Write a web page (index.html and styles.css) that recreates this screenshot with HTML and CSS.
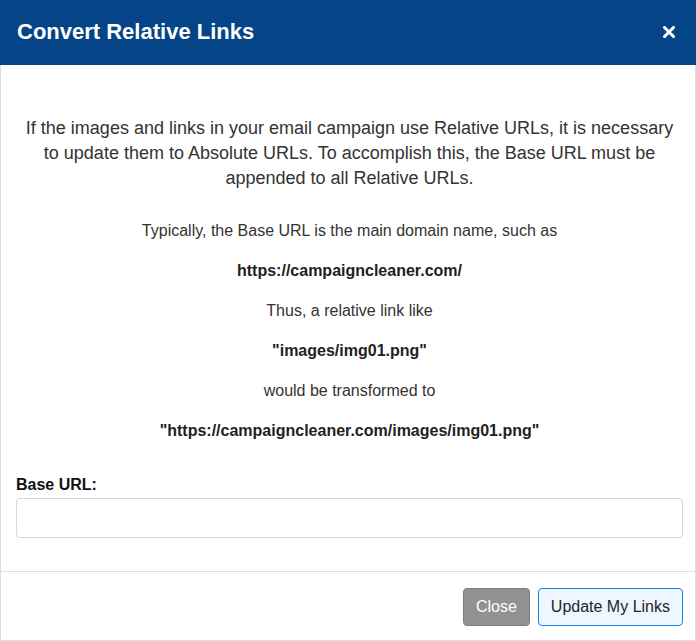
FILE: index.html
```html
<!DOCTYPE html>
<html lang="en">
<head>
<meta charset="utf-8">
<title>Convert Relative Links</title>
<link rel="stylesheet" href="styles.css">
</head>
<body>
<div class="modal">
  <div class="modal-header">
    <h5 class="modal-title">Convert Relative Links</h5>
    <button class="btn-x" type="button" aria-label="Close">
      <svg width="12" height="12" viewBox="0 0 12 12"><path d="M1.5 1.5 L10.5 10.5 M10.5 1.5 L1.5 10.5" stroke="#fff" stroke-width="3" stroke-linecap="square"/></svg>
    </button>
  </div>
  <div class="modal-body">
    <p class="lead">If the images and links in your email campaign use Relative URLs, it is necessary to update them to Absolute URLs. To accomplish this, the Base URL must be appended to all Relative URLs.</p>
    <p class="info">Typically, the Base URL is the main domain name, such as</p>
    <p class="info strong">https://campaigncleaner.com/</p>
    <p class="info">Thus, a relative link like</p>
    <p class="info strong">"images/img01.png"</p>
    <p class="info">would be transformed to</p>
    <p class="info strong">"https://campaigncleaner.com/images/img01.png"</p>
    <label class="field-label" for="baseurl">Base URL:</label>
    <input class="field-input" id="baseurl" type="text">
  </div>
  <div class="modal-footer">
    <button class="btn btn-close" type="button">Close</button>
    <button class="btn btn-update" type="button">Update My Links</button>
  </div>
</div>
</body>
</html>
```
FILE: styles.css
```css
* { box-sizing: border-box; }
html, body { margin: 0; padding: 0; background: #fff; }
body { font-family: "Liberation Sans", Arial, sans-serif; color: #333; }

.modal {
  width: 696px;
  height: 641px;
  border: 1px solid #dcdcdc;
  border-top: 0;
  display: flex;
  flex-direction: column;
  background: #fff;
}

.modal-header {
  height: 67px;
  margin: 0 -1px;
  background: #054487;
  display: flex;
  align-items: center;
  justify-content: space-between;
  padding: 0 21px 2px 17px;
}
.modal-title {
  margin: 0;
  font-size: 22px;
  font-weight: bold;
  color: #fff;
  line-height: 26px;
}
.btn-x {
  border: 0;
  background: transparent;
  padding: 0;
  width: 12px;
  height: 12px;
  display: flex;
}

.modal-body {
  flex: 1;
  padding: 51px 12px 33px 15px;
  text-align: center;
}
.lead {
  margin: 0 0 28px;
  font-size: 18px;
  line-height: 25px;
  padding: 0 6px;
}
.info {
  margin: 0 0 16px;
  font-size: 16px;
  line-height: 24px;
}
.info.strong { font-weight: bold; color: #222; }
.info:last-of-type { margin-bottom: 30px; }

.field-label {
  display: block;
  text-align: left;
  font-size: 16px;
  font-weight: bold;
  color: #111;
  line-height: 24px;
  margin-bottom: 1px;
}
.field-input {
  display: block;
  width: 100%;
  height: 40px;
  border: 1px solid #d6d6d6;
  border-radius: 4px;
  font-size: 16px;
  padding: 6px 12px;
}

.modal-footer {
  border-top: 1px solid #dedede;
  display: flex;
  justify-content: flex-end;
  gap: 8px;
  padding: 16px 12px 14px;
}
.btn {
  font-family: "Liberation Sans", Arial, sans-serif;
  font-size: 16px;
  line-height: 24px;
  padding: 6px 12px;
  border-radius: 4px;
  height: 38px;
  cursor: pointer;
}
.btn-close {
  background: #909291;
  border: 1px solid #7d7f7e;
  color: #fff;
}
.btn-update {
  background: #eef6ff;
  border: 1px solid #1a7ff0;
  color: #212529;
}
```
